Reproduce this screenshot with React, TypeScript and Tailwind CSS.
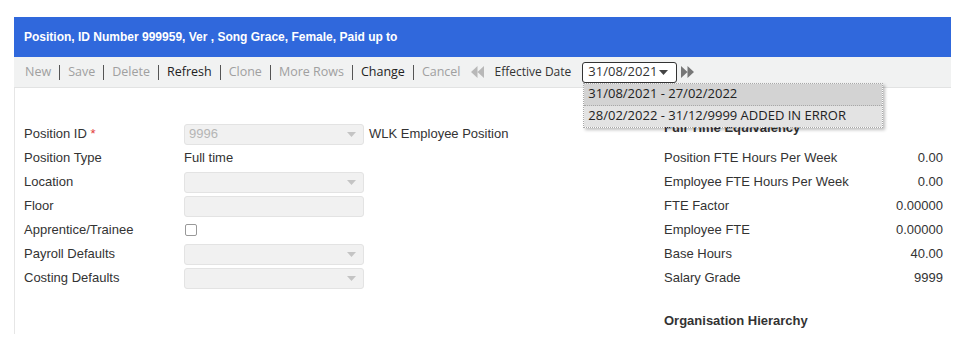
import React from 'react';

const toolbarItems: { label: string; enabled: boolean }[] = [
  { label: 'New', enabled: false },
  { label: 'Save', enabled: false },
  { label: 'Delete', enabled: false },
  { label: 'Refresh', enabled: true },
  { label: 'Clone', enabled: false },
  { label: 'More Rows', enabled: false },
  { label: 'Change', enabled: true },
  { label: 'Cancel', enabled: false },
];

const fteRows: [string, string][] = [
  ['Position FTE Hours Per Week', '0.00'],
  ['Employee FTE Hours Per Week', '0.00'],
  ['FTE Factor', '0.00000'],
  ['Employee FTE', '0.00000'],
  ['Base Hours', '40.00'],
  ['Salary Grade', '9999'],
];

const Caret = () => (
  <svg width="9" height="5" viewBox="0 0 9 5" className="shrink-0">
    <path d="M0 0h9L4.5 5z" fill="currentColor" />
  </svg>
);

const DoubleArrow = ({ dir, color }: { dir: 'left' | 'right'; color: string }) => (
  <svg width="15" height="14" viewBox="0 0 15 14" style={{ transform: dir === 'left' ? 'scaleX(-1)' : undefined }}>
    <path d="M1 1l6.5 6L1 13z M7.5 1L14 7l-6.5 6z" fill={color} />
  </svg>
);

const DisabledSelect = ({ value }: { value?: string }) => (
  <div className="flex h-[21px] w-[180px] items-center justify-between rounded-[3px] border border-[#e3e3e3] bg-[#f1f1f1] pl-[4px] pr-[7px] text-[#b5b5b5]">
    <span>{value}</span>
    <span className="text-[#c4c4c4]">
      <Caret />
    </span>
  </div>
);

const FormRow = ({ label, children }: { label: React.ReactNode; children?: React.ReactNode }) => (
  <div className="flex h-[24px] items-center">
    <div className="w-[160px] shrink-0">{label}</div>
    <div className="flex items-center">{children}</div>
  </div>
);

export default function App() {
  return (
    <div className="min-h-[343px] bg-white pl-[14px] pr-[10px] pt-[17px] text-[13px] text-[#333]" style={{ fontFamily: '"Liberation Sans", Arial, sans-serif' }}>
      {/* Title bar */}
      <div className="flex h-[40px] items-center bg-[#3068dc] pl-[10px] text-[12px] font-bold text-white">
        Position, ID Number 999959, Ver , Song Grace, Female, Paid up to
      </div>

      {/* Toolbar */}
      <div
        className="flex h-[31px] items-center border-b border-[#e2e3e3] bg-[#f1f2f2] pl-[11px] text-[12.5px]"
        style={{ fontFamily: '"Open Sans", "Noto Sans", sans-serif' }}
      >
        {toolbarItems.map((item, i) => (
          <React.Fragment key={item.label}>
            {i > 0 && <span className="mx-[8px] h-[15px] w-px bg-[#555]" />}
            <span className={item.enabled ? 'text-[#222]' : 'text-[#a0a0a0]'}>{item.label}</span>
          </React.Fragment>
        ))}
        <span className="ml-[9px]">
          <DoubleArrow dir="left" color="#b8b8b8" />
        </span>
        <span className="ml-[10px] text-[12px] text-[#333]">Effective Date</span>
        <div className="relative ml-[11px]">
          <div className="flex h-[21px] w-[95px] items-center justify-between rounded-[3px] border border-[#333] bg-white pl-[5px] pr-[8px] text-[13px] text-[#333]">
            <span>31/08/2021</span>
            <span className="text-[#444]">
              <Caret />
            </span>
          </div>
          {/* Open dropdown list */}
          <div className="absolute left-px top-[21px] z-10 w-[300px] border border-dotted border-[#a8a8a8] text-[13px] text-[#222] shadow-[2px_2px_3px_rgba(0,0,0,0.25)]">
            <div className="flex h-[22px] items-center border-b border-dotted border-[#a8a8a8] bg-[#d3d3d3] pl-[4px]">
              31/08/2021 - 27/02/2022
            </div>
            <div className="flex h-[21px] items-center bg-[#e3e3e3] pl-[4px]">28/02/2022 - 31/12/9999 ADDED IN ERROR</div>
          </div>
        </div>
        <span className="ml-[3px]">
          <DoubleArrow dir="right" color="#777" />
        </span>
      </div>

      {/* Content */}
      <div className="flex h-[246px] border-l border-[#e6e6e6] pl-[9px]">
        <div className="w-[640px] pt-[34px]">
          <FormRow label={<>Position ID <span className="text-[#e23c3c]">*</span></>}>
            <DisabledSelect value="9996" />
            <span className="ml-[5px]">WLK Employee Position</span>
          </FormRow>
          <FormRow label="Position Type">
            <span>Full time</span>
          </FormRow>
          <FormRow label="Location">
            <DisabledSelect />
          </FormRow>
          <FormRow label="Floor">
            <div className="h-[21px] w-[180px] rounded-[3px] border border-[#e3e3e3] bg-[#f1f1f1]" />
          </FormRow>
          <FormRow label="Apprentice/Trainee">
            <div className="ml-px h-[12px] w-[12px] rounded-[2px] border border-[#999] bg-white" />
          </FormRow>
          <FormRow label="Payroll Defaults">
            <DisabledSelect />
          </FormRow>
          <FormRow label="Costing Defaults">
            <DisabledSelect />
          </FormRow>
        </div>

        <div className="w-[279px] pt-[28px]">
          <div className="flex h-[24px] items-center font-bold">Full Time Equivalency</div>
          <div className="h-[6px]" />
          {fteRows.map(([label, value]) => (
            <div key={label} className="flex h-[24px] items-center justify-between">
              <span>{label}</span>
              <span>{value}</span>
            </div>
          ))}
          <div className="mt-[19px] flex h-[24px] items-center font-bold">Organisation Hierarchy</div>
        </div>
      </div>
    </div>
  );
}
